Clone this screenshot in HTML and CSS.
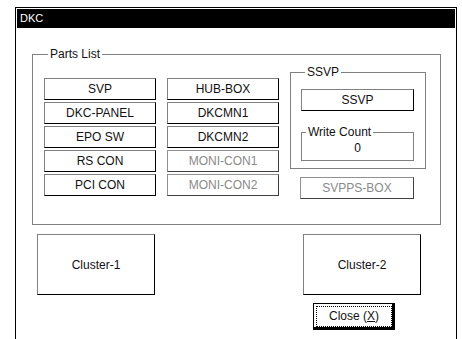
FILE: index.html
```html
<!DOCTYPE html>
<html lang="en">
<head>
  <meta charset="UTF-8" />
  <title>DKC</title>
  <link rel="stylesheet" href="styles.css">
</head>
<body>

<div class="window">
  <div class="titlebar">DKC</div>

  <div class="client">
    <div class="group parts">
      <div class="group-label">Parts List</div>
      <div class="parts-grid">
        <div class="col">
          <div class="part">SVP</div>
          <div class="part">DKC-PANEL</div>
          <div class="part">EPO SW</div>
          <div class="part">RS CON</div>
          <div class="part">PCI CON</div>
        </div>
        <div class="col">
          <div class="part">HUB-BOX</div>
          <div class="part">DKCMN1</div>
          <div class="part">DKCMN2</div>
          <div class="part disabled">MONI-CON1</div>
          <div class="part disabled">MONI-CON2</div>
        </div>
        <div class="col-ssvp">
          <div class="group ssvp">
            <div class="group-label">SSVP</div>
            <div class="part ssvp-btn">SSVP</div>
            <div class="group count">
              <div class="group-label">Write Count</div>
              <div class="count-value">0</div>
            </div>
          </div>
          <div class="part disabled svpps">SVPPS-BOX</div>
        </div>
      </div>
    </div>

    <div class="lower">
      <div class="cluster">Cluster-1</div>
      <div class="right-side">
        <div class="cluster">Cluster-2</div>
        <button class="close-btn"><span class="focus">Close (<u>X</u>)</span></button>
      </div>
    </div>
  </div>
</div>

</body>
</html>
```

FILE: styles.css
```css
body {
  margin: 0;
  padding: 7px 0 0 15px;
  font: 12px "Liberation Sans", Arial, sans-serif;
  color: #111;
  background: #fff;
  overflow: hidden;
}

.window { width: 440px; height: 345px; border: 1px solid #000; }
.titlebar {
  margin: 1px 1px 0; height: 19px; line-height: 19px;
  padding-left: 3px; background: #000; color: #fff; font-size: 11px;
}
.client { padding: 26px 15px 0 16px; }

.group { border: 1px solid #808080; }
.group-label {
  width: max-content; margin: -8px 0 0 4px; padding: 0 2px;
  line-height: 14px; background: #fff;
}

.parts { padding: 0 11px 25px; }
.parts-grid { display: flex; gap: 11px; margin-top: 11px; align-items: flex-start; }
.col { width: 112px; padding-top: 6px; display: flex; flex-direction: column; gap: 2px; }

.part {
  height: 20px; line-height: 20px; text-align: center;
  border: 1px solid; border-color: #808080 #000 #000 #808080;
}
.part.disabled { color: #8a8a8a; border-color: #909090 #404040 #404040 #909090; }

.col-ssvp { width: 136px; }
.ssvp { padding: 0 11px 7px 10px; }
.ssvp-btn { margin-top: 10px; }
.count { margin-top: 21px; padding-bottom: 5px; }
.count-value { text-align: center; line-height: 14px; padding-top: 2px; }
.svpps { margin: 8px 12px 0 10px; }

.lower { display: flex; justify-content: space-between; margin-top: 9px; padding: 0 20px 0 5px; }
.cluster {
  width: 116px; height: 59px; display: flex; align-items: center; justify-content: center;
  border: 1px solid; border-color: #808080 #000 #000 #808080;
}
.right-side { display: flex; flex-direction: column; align-items: flex-start; gap: 8px; }

.close-btn {
  width: 82px; height: 27px; padding: 2px; margin-left: 10px;
  font: inherit; color: inherit; background: #fff;
  border: 1px solid #000; box-shadow: inset -2px -2px 0 #000, inset 1px 1px 0 #fff;
}
.focus { display: block; height: 19px; line-height: 19px; border: 1px dotted #000; }
```
